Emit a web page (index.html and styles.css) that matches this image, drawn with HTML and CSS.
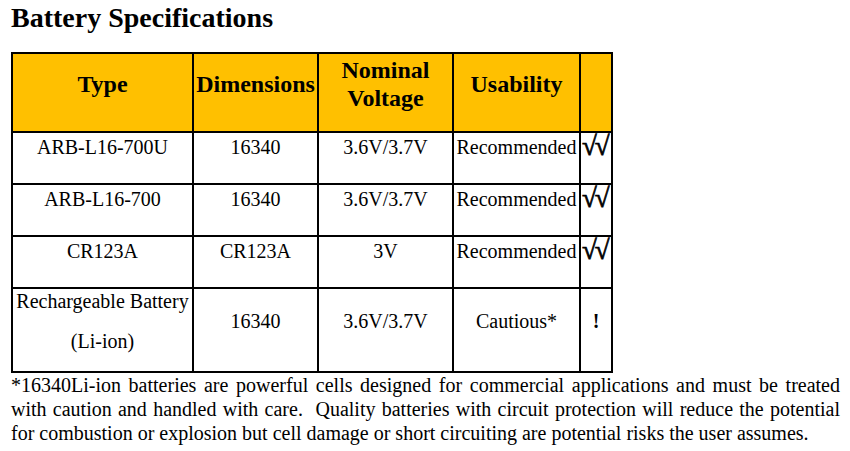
FILE: index.html
```html
<!DOCTYPE html>
<html>
<head>
<meta charset="utf-8">
<title>Battery Specifications</title>
<link rel="stylesheet" href="styles.css">
</head>
<body>
<div class="page">
  <h1 class="title">Battery Specifications</h1>
  <table class="spec">
    <colgroup>
      <col class="c-type">
      <col class="c-dim">
      <col class="c-volt">
      <col class="c-use">
      <col class="c-mark">
    </colgroup>
    <thead>
      <tr class="head">
        <th>Type</th>
        <th>Dimensions</th>
        <th>Nominal<br>Voltage</th>
        <th>Usability</th>
        <th></th>
      </tr>
    </thead>
    <tbody>
      <tr class="row">
        <td>ARB-L16-700U</td>
        <td>16340</td>
        <td>3.6V/3.7V</td>
        <td>Recommended</td>
        <td class="mark">√√</td>
      </tr>
      <tr class="row">
        <td>ARB-L16-700</td>
        <td>16340</td>
        <td>3.6V/3.7V</td>
        <td>Recommended</td>
        <td class="mark">√√</td>
      </tr>
      <tr class="row">
        <td>CR123A</td>
        <td>CR123A</td>
        <td>3V</td>
        <td>Recommended</td>
        <td class="mark">√√</td>
      </tr>
      <tr class="row last">
        <td class="multi"><div class="ln">Rechargeable Battery</div><div class="ln gap">(Li-ion)</div></td>
        <td>16340</td>
        <td>3.6V/3.7V</td>
        <td>Cautious*</td>
        <td class="warn">!</td>
      </tr>
    </tbody>
  </table>
  <p class="note">*16340Li-ion batteries are powerful cells designed for commercial applications and must be treated with caution and handled with care.&nbsp; Quality batteries with circuit protection will reduce the potential for combustion or explosion but cell damage or short circuiting are potential risks the user assumes.</p>
</div>
</body>
</html>
```

FILE: styles.css
```css
html, body {
  margin: 0;
  padding: 0;
  background: #ffffff;
}

.page {
  padding: 2px 10px 0 11px;
  font-family: "Liberation Serif", "Times New Roman", serif;
  color: #000000;
}

.title {
  margin: 0;
  font-size: 28px;
  line-height: 32px;
  font-weight: bold;
}

.spec {
  margin-top: 18px;
  border-collapse: collapse;
  table-layout: fixed;
  width: 601px;
  border: 2px solid #000000;
}

.c-type { width: 181px; }
.c-dim { width: 125px; }
.c-volt { width: 135px; }
.c-use { width: 127px; }
.c-mark { width: 32px; }

.spec th,
.spec td {
  border: 2px solid #000000;
  padding: 0;
  text-align: center;
  white-space: nowrap;
}

.head th {
  background: #ffc000;
  font-size: 24px;
  line-height: 28px;
  font-weight: bold;
  height: 60px;
  vertical-align: middle;
  padding-bottom: 17px;
}

.row td {
  font-size: 20px;
  line-height: 28px;
  height: 50px;
  vertical-align: top;
}

.row .mark {
  font-size: 27px;
  font-weight: bold;
  line-height: 26px;
  letter-spacing: -2px;
  -webkit-text-stroke: 0.7px #000000;
  overflow: visible;
  text-align: left;
  padding-left: 1px;
}

.last td {
  height: 64px;
  padding-top: 18px;
}

.last .multi {
  padding-top: 0;
  height: 82px;
}

.multi .ln {
  line-height: 24px;
}

.multi .gap {
  margin-top: 16px;
}

.warn {
  font-weight: bold;
}

.note {
  margin: 0;
  width: 829px;
  font-size: 20px;
  line-height: 24px;
  text-align: justify;
}
```
